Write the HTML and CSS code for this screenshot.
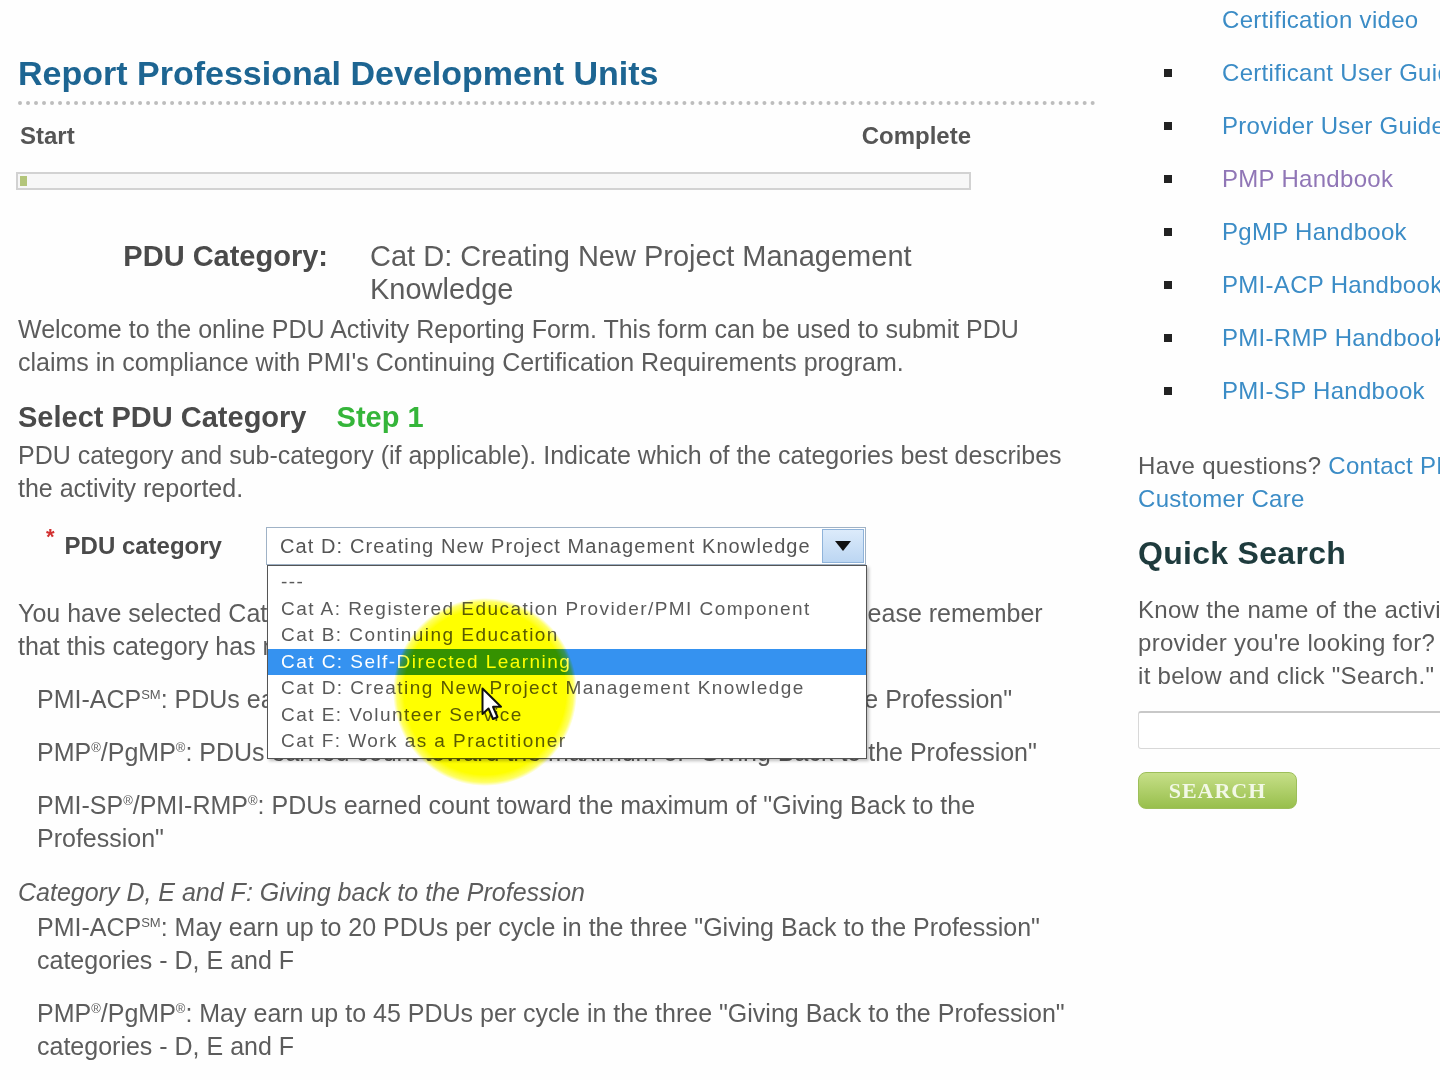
FILE: index.html
```html
<!DOCTYPE html>
<html lang="en">
<head>
    <meta charset="UTF-8">
    <meta name="viewport" content="width=device-width, initial-scale=1.0">
    <title>Report Professional Development Units</title>
    <link rel="stylesheet" href="styles.css">
</head>
<body>
    <div class="page">
        <main class="main">
            <h1 class="page-title">Report Professional Development Units</h1>

            <div class="progress-labels">
                <span>Start</span>
                <span>Complete</span>
            </div>
            <div class="progress-bar"><div class="progress-fill"></div></div>

            <div class="category-summary">
                <div class="summary-label">PDU Category:</div>
                <div class="summary-value">Cat D: Creating New Project Management Knowledge</div>
            </div>

            <p class="intro">Welcome to the online PDU Activity Reporting Form. This form can be used to submit PDU claims in compliance with PMI's Continuing Certification Requirements program.</p>

            <h2 class="step-title">Select PDU Category <span class="step">Step 1</span></h2>
            <p class="intro">PDU category and sub-category (if applicable). Indicate which of the categories best describes the activity reported.</p>

            <div class="form-row">
                <label class="field-label"><span class="required">*</span>PDU category</label>
                <div class="select-wrap">
                    <div class="select-box">
                        <span class="select-text">Cat D: Creating New Project Management Knowledge</span>
                        <span class="select-arrow">
                            <svg width="18" height="12" viewBox="0 0 18 12"><path d="M1 1 L17 1 L9 11 Z" fill="#111"/></svg>
                        </span>
                    </div>
                    <ul class="dropdown">
                        <li>---</li>
                        <li>Cat A: Registered Education Provider/PMI Component</li>
                        <li>Cat B: Continuing Education</li>
                        <li class="active">Cat C: Self-Directed Learning</li>
                        <li>Cat D: Creating New Project Management Knowledge</li>
                        <li>Cat E: Volunteer Service</li>
                        <li>Cat F: Work as a Practitioner</li>
                    </ul>
                </div>
            </div>

            <p class="selected-note">You have selected Category D: Creating Project Management Knowledge. Please remember that this category has maximum PDU limits:</p>

            <div class="limits">
                <p>PMI-ACP<sup>SM</sup>: PDUs earned count toward the maximum of "Giving Back to the Profession"</p>
                <p>PMP<sup>®</sup>/PgMP<sup>®</sup>: PDUs earned count toward the maximum of "Giving Back to the Profession"</p>
                <p>PMI-SP<sup>®</sup>/PMI-RMP<sup>®</sup>: PDUs earned count toward the maximum of "Giving Back to the Profession"</p>
            </div>

            <p class="group-title">Category D, E and F: Giving back to the Profession</p>
            <div class="limits tight">
                <p>PMI-ACP<sup>SM</sup>: May earn up to 20 PDUs per cycle in the three "Giving Back to the Profession" categories - D, E and F</p>
                <p>PMP<sup>®</sup>/PgMP<sup>®</sup>: May earn up to 45 PDUs per cycle in the three "Giving Back to the Profession" categories - D, E and F</p>
            </div>
        </main>

        <aside class="sidebar">
            <ul class="resource-list">
                <li class="continued"><a href="#">Certification video</a></li>
                <li><a href="#">Certificant User Guide</a></li>
                <li><a href="#">Provider User Guide</a></li>
                <li><a href="#" class="visited">PMP Handbook</a></li>
                <li><a href="#">PgMP Handbook</a></li>
                <li><a href="#">PMI-ACP Handbook</a></li>
                <li><a href="#">PMI-RMP Handbook</a></li>
                <li><a href="#">PMI-SP Handbook</a></li>
            </ul>

            <p class="side-text">Have questions? <a href="#">Contact PMI<br>Customer Care</a></p>

            <h3 class="side-title">Quick Search</h3>
            <p class="side-text">Know the name of the activity or<br>provider you're looking for? Type<br>it below and click "Search."</p>
            <input class="search-input" type="text">
            <button class="search-button">SEARCH</button>
        </aside>
    </div>

    <div class="cursor-spot"></div>
    <svg class="cursor" width="24" height="36" viewBox="0 0 24 36">
        <path d="M1.5 1.5 L1.5 27 L7.5 21.5 L12 32 L16.5 30 L12 19.8 L20 19.8 Z" fill="#fff" stroke="#111" stroke-width="2" stroke-linejoin="round"/>
    </svg>
</body>
</html>
```

FILE: styles.css
```css
* {
    margin: 0;
    padding: 0;
    box-sizing: border-box;
}

body {
    font-family: 'Liberation Sans', Arial, sans-serif;
    background-color: #fefefe;
    color: #5c5c5c;
    width: 1440px;
    height: 1080px;
    overflow: hidden;
    position: relative;
}

a {
    color: #3b8cc6;
    text-decoration: none;
}

.page {
    display: flex;
}

.main {
    flex: 0 0 1096px;
    padding-left: 18px;
    font-size: 25px;
    line-height: 33px;
}

.page-title {
    margin-top: 53px;
    padding-bottom: 8px;
    font-size: 34px;
    line-height: 40px;
    color: #1d6592;
    border-bottom: 4px dotted #bdbdbd;
}

.progress-labels {
    display: flex;
    justify-content: space-between;
    width: 953px;
    margin-top: 16px;
    padding-left: 2px;
    font-size: 24px;
    line-height: 30px;
    font-weight: bold;
    color: #555;
}

.progress-bar {
    width: 955px;
    height: 18px;
    margin: 21px 0 0 -2px;
    padding: 2px;
    border: 2px solid #d2d2d2;
    background-color: #f7f7f7;
}

.progress-fill {
    width: 7px;
    height: 100%;
    background-color: #b3c57a;
}

.category-summary {
    display: flex;
    gap: 42px;
    margin-top: 50px;
    font-size: 29px;
}

.summary-label {
    flex: 0 0 310px;
    text-align: right;
    font-weight: bold;
    color: #4a4a4a;
}

.summary-value {
    width: 560px;
}

.intro {
    margin-top: 7px;
    padding-right: 8px;
}

.step-title {
    margin-top: 20px;
    font-size: 29px;
    line-height: 36px;
    color: #4a4a4a;
}

.step {
    margin-left: 22px;
    color: #35b53a;
}

.step-title + .intro {
    margin-top: 4px;
}

.form-row {
    display: flex;
    align-items: center;
    margin-top: 22px;
}

.field-label {
    flex: 0 0 248px;
    padding-left: 28px;
    font-size: 24px;
    font-weight: bold;
    color: #4a4a4a;
}

.required {
    position: relative;
    top: -10px;
    margin-right: 10px;
    font-size: 22px;
    color: #d23030;
}

.select-wrap {
    position: relative;
}

.select-box {
    display: flex;
    align-items: center;
    width: 600px;
    height: 38px;
    padding: 0 1px 0 13px;
    border: 1px solid #9fb2c6;
    background-color: #fff;
    font-size: 20px;
    letter-spacing: 1.1px;
    color: #555;
}

.select-text {
    flex: 1;
    white-space: nowrap;
}

.select-arrow {
    display: flex;
    align-items: center;
    justify-content: center;
    width: 42px;
    height: 34px;
    border: 1px solid #8fb3da;
    background: linear-gradient(#dcebfb, #bcd6f2);
}

.dropdown {
    position: absolute;
    top: 100%;
    left: 1px;
    width: 600px;
    padding: 3px 0;
    list-style: none;
    border: 1px solid #555;
    background-color: #fff;
    box-shadow: 2px 2px 3px rgba(0, 0, 0, 0.25);
    font-size: 19px;
    letter-spacing: 1.45px;
    color: #5a5a5a;
    z-index: 5;
}

.dropdown li {
    height: 26.5px;
    line-height: 26.5px;
    padding-left: 13px;
    white-space: nowrap;
}

.dropdown li.active {
    background-color: #3592f0;
    color: #fff;
}

.selected-note {
    margin-top: 32px;
    padding-right: 30px;
}

.limits {
    margin-top: 2px;
    padding-left: 19px;
}

.limits p {
    margin-top: 20px;
}

.limits.tight p:first-child {
    margin-top: 0;
}

sup {
    font-size: 13px;
    line-height: 0;
    letter-spacing: 0;
}

.group-title {
    margin-top: 21px;
    font-style: italic;
}

.sidebar {
    flex: 0 0 auto;
    margin-left: 42px;
    padding-top: 3px;
    font-size: 24px;
    line-height: 33px;
    letter-spacing: 0.3px;
    white-space: nowrap;
}

.resource-list {
    list-style: none;
}

.resource-list li {
    display: flex;
    align-items: center;
    margin-top: 20px;
}

.resource-list li:first-child {
    margin-top: 0;
}

.resource-list li::before {
    content: "";
    flex: 0 0 8px;
    height: 8px;
    margin: 0 50px 0 26px;
    background-color: #222;
}

.resource-list li.continued::before {
    visibility: hidden;
}

.resource-list a.visited {
    color: #9076b6;
}

.side-text {
    margin-top: 42px;
    color: #5a5a5a;
}

.side-title {
    margin-top: 18px;
    font-size: 32px;
    line-height: 40px;
    color: #1e3b3d;
}

.side-title + .side-text {
    margin-top: 20px;
}

.search-input {
    display: block;
    width: 330px;
    height: 38px;
    margin-top: 19px;
    border: 1px solid #d8d8d8;
    border-top: 2px solid #c8c8c8;
    border-radius: 3px;
    background-color: #fff;
}

.search-button {
    display: block;
    width: 159px;
    height: 37px;
    margin-top: 23px;
    border: 1px solid #9dbf5a;
    border-radius: 8px;
    background: linear-gradient(#c6df88, #98bf4c);
    font-family: 'Liberation Serif', 'Times New Roman', serif;
    font-size: 22px;
    font-weight: bold;
    letter-spacing: 1px;
    color: #f2f8e6;
}

/* yellow cursor highlight from the screen recording */
.cursor-spot {
    position: absolute;
    left: 393px;
    top: 598px;
    width: 184px;
    height: 188px;
    border-radius: 50%;
    background: radial-gradient(closest-side, #ffff00 88%, rgba(255, 255, 0, 0.6) 96%, rgba(255, 255, 0, 0) 100%);
    mix-blend-mode: multiply;
    z-index: 10;
}

.cursor {
    position: absolute;
    left: 481px;
    top: 687px;
    z-index: 11;
}
```
